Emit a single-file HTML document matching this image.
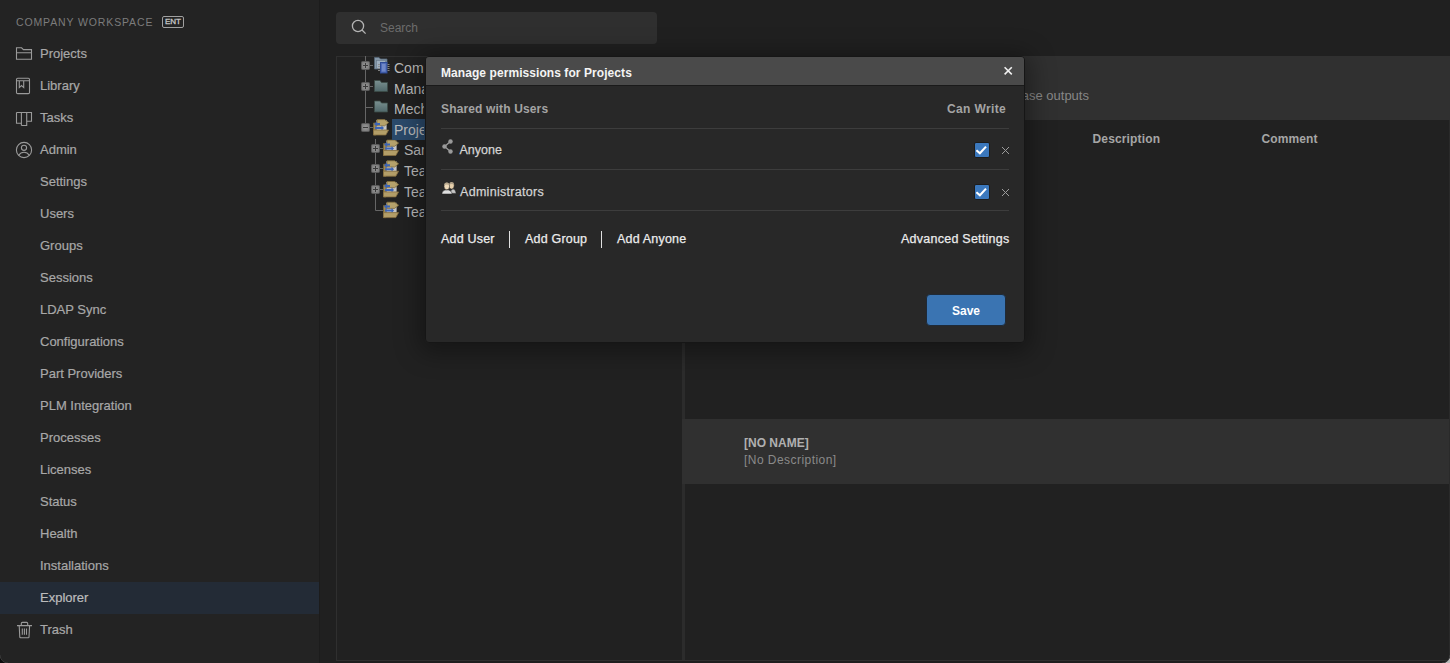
<!DOCTYPE html>
<html><head><meta charset="utf-8">
<style>
*{box-sizing:border-box;margin:0;padding:0}
html,body{width:1450px;height:663px;overflow:hidden;background:#202020;font-family:"Liberation Sans",sans-serif}
.a{position:absolute;white-space:nowrap}
#side{position:absolute;left:0;top:0;width:320px;height:663px;background:#232323;border-right:1px solid #1c1c1c;overflow:hidden}
.ws{left:16px;top:16px;font-size:10.5px;line-height:12px;letter-spacing:0.87px;color:#7c7c7c}
.ent{left:162px;top:16px;width:22px;height:12px;border:1px solid #a0a0a0;border-radius:2px;font-size:8px;color:#c8c8c8;text-align:center;line-height:10px;-webkit-text-stroke:0.3px #c8c8c8}
.mi{left:40px;font-size:13px;color:#a8a8a8;line-height:16px;-webkit-text-stroke:0.2px #a8a8a8}
.ic{position:absolute;left:14px}
#sel{position:absolute;left:0;top:582px;width:319px;height:32px;background:#232b36}
#search{position:absolute;left:336px;top:12px;width:321px;height:32px;background:#2f2f2f;border-radius:4px}
#tree{position:absolute;left:336px;top:56px;width:347px;height:605px;background:#212121;border:1px solid #2f2f2f;border-right:none}
#divider{position:absolute;left:682px;top:56px;width:3px;height:607px;background:#2c2c2c}
#right{position:absolute;left:685px;top:56px;width:765px;height:607px;background:#212121}
#rhead{position:absolute;left:685px;top:56px;width:765px;height:64px;background:#303030}
#row{position:absolute;left:682px;top:419px;width:768px;height:65px;background:#303030}
.th{font-size:12px;font-weight:bold;color:#a6a6a6;line-height:14px}
.tt{font-size:14px;color:#bcbcbc;line-height:16px}
#shadow{position:absolute;left:425px;top:56px;width:600px;height:287px;box-shadow:0 4px 24px 6px rgba(0,0,0,.35);border-radius:4px}
#modal{position:absolute;left:425px;top:56px;width:600px;height:287px;background:#282828;border:1px solid #161616;border-radius:4px;overflow:hidden}
#mhead{position:absolute;left:0;top:0;width:598px;height:29px;background:#4a4a4a;border-bottom:1px solid #1a1a1a}
.mt{font-size:12px;line-height:14px}
.md{-webkit-text-stroke:0.25px currentColor}
.sep{position:absolute;left:15px;width:568px;height:1px;background:#3d3d3d}
.cb{position:absolute;width:16px;height:16px;background:#3b78bd;border:1px solid #1c1c1c;border-radius:2px}
#save{position:absolute;left:500px;top:237px;width:80px;height:32px;background:#3a74b2;border-radius:4px;border:1px solid #1e2a38}
</style></head><body>
<div id="side">
  <div class="a ws">COMPANY WORKSPACE</div>
  <div class="a ent">ENT</div>
  <div id="sel"></div>
  <svg class="ic" style="top:0;left:0" width="40" height="663" fill="none" stroke="#9a9a9a" stroke-width="1.1">
    <!-- folder -->
    <path d="M16.5 47.8 H21.6 L23.4 49.6 H31.5 V59.3 H16.5 Z M16.5 52.8 H31.5"/>
    <!-- library -->
    <rect x="16.5" y="78.3" width="13" height="15.3" rx="1.2"/>
    <path d="M16.5 80.8 H29.5 M19.3 80.8 V87.6 L21.5 85.6 L23.7 87.6 V80.8"/>
    <!-- tasks -->
    <path d="M16.5 112.5 H31.5 V121.2 H26.7 M16.5 112.5 V123.3 H21.4 V112.5 M21.4 125.5 H26.7 V112.5 M21.4 123.3 V125.5"/>
    <!-- admin -->
    <circle cx="24" cy="150" r="7.6"/>
    <circle cx="24" cy="147.8" r="2.6"/>
    <path d="M18.6 155.4 C20 153.2 22 152.3 24 152.3 C26 152.3 28 153.2 29.4 155.4"/>
    <!-- trash -->
    <path d="M17 625.6 H32 M21.3 625.6 V623.5 Q21.3 622.4 22.4 622.4 H26.6 Q27.7 622.4 27.7 623.5 V625.6 M19.2 625.6 L19.8 637.2 Q19.9 637.8 20.5 637.8 H28.3 Q28.9 637.8 29 637.2 L29.6 625.6 M22.3 628.4 V634.8 M24.4 628.4 V634.8 M26.5 628.4 V634.8"/>
  </svg>
  <div class="a mi" style="top:46px">Projects</div>
  <div class="a mi" style="top:78px">Library</div>
  <div class="a mi" style="top:110px">Tasks</div>
  <div class="a mi" style="top:142px">Admin</div>
  <div class="a mi" style="top:174px">Settings</div>
  <div class="a mi" style="top:206px">Users</div>
  <div class="a mi" style="top:238px">Groups</div>
  <div class="a mi" style="top:270px">Sessions</div>
  <div class="a mi" style="top:302px">LDAP Sync</div>
  <div class="a mi" style="top:334px">Configurations</div>
  <div class="a mi" style="top:366px">Part Providers</div>
  <div class="a mi" style="top:398px">PLM Integration</div>
  <div class="a mi" style="top:430px">Processes</div>
  <div class="a mi" style="top:462px">Licenses</div>
  <div class="a mi" style="top:494px">Status</div>
  <div class="a mi" style="top:526px">Health</div>
  <div class="a mi" style="top:558px">Installations</div>
  <div class="a mi" style="top:590px;color:#bcbcbc;-webkit-text-stroke-color:#bcbcbc">Explorer</div>
  <div class="a mi" style="top:622px">Trash</div>
</div>

<div id="search">
  <svg style="position:absolute;left:0;top:0" width="60" height="32" fill="none" stroke="#b4b4b4" stroke-width="1.3">
    <circle cx="22" cy="14" r="5.6"/><path d="M26 18 L29.6 21.6"/>
  </svg>
  <div class="a" style="left:44px;top:9px;font-size:12px;line-height:14px;color:#6c6c6c">Search</div>
</div>

<div id="tree"></div>
<div id="right"></div>
<div id="divider"></div>
<div id="rhead"><div class="a" style="left:310px;top:32px;font-size:13px;line-height:16px;color:#878787">Release outputs</div></div>
<div class="a th" style="left:1092.5px;top:132px;letter-spacing:0.15px">Description</div>
<div class="a th" style="left:1261.5px;top:132px;letter-spacing:0.1px">Comment</div>
<div id="row">
  <div class="a" style="left:62px;top:17px;font-size:12px;line-height:14px;font-weight:bold;color:#b0b0b0">[NO NAME]</div>
  <div class="a" style="left:62px;top:34px;font-size:12px;line-height:14px;letter-spacing:0.45px;color:#8a8a8a">[No Description]</div>
</div>

<!-- tree content -->
<svg style="position:absolute;left:336px;top:56px" width="120" height="180">
  <defs>
    <linearGradient id="fg" x1="0" y1="0" x2="0" y2="1"><stop offset="0" stop-color="#7a9090"/><stop offset="1" stop-color="#50686a"/></linearGradient>
    <radialGradient id="bx" cx="0.5" cy="0.5" r="0.6"><stop offset="0" stop-color="#9a9a9a"/><stop offset="1" stop-color="#767676"/></radialGradient>
    <g id="pf">
      <path d="M0.5 4 V16 H3 V4 Z" fill="#9c8858" stroke="#7a6838" stroke-width="0.8"/>
      <rect x="3.5" y="1.5" width="10" height="10" fill="#c6c6c6" stroke="#8a8a8a" stroke-width="0.8"/>
      <path d="M4 0.6 H11.6 L15.6 3.6 L11.6 6.8 H4 Z" fill="#b5a26c" stroke="#806c3c" stroke-width="0.8"/>
      <path d="M1 5 L4 2.4 V4 H7 V6 H4 V7.6 Z" fill="#3c64b4"/>
      <path d="M2 8 H8.5 V6.4 L11 9 L8.5 11.6 V10 H2 Z" fill="#3c64b4"/>
      <path d="M0.5 11 H15.6 L12.8 16 H0.5 Z" fill="#b39e68" stroke="#866f40" stroke-width="0.8"/>
    </g>
  </defs>
  <g stroke="#666" stroke-width="1" fill="none">
    <path d="M29.5 0 V67 M34 9.5 H37 M34 30.5 H37 M29.5 51.5 H37 M34 71.5 H37"/>
    <path d="M39.5 83 V154.5 H47 M44 92.5 H47 M44 112.5 H47 M44 133.5 H47"/>
  </g>
  <g fill="url(#bx)" stroke="#5c5c5c" stroke-width="1">
    <rect x="25.5" y="5.5" width="8" height="8" rx="1"/>
    <rect x="25.5" y="26.5" width="8" height="8" rx="1"/>
    <rect x="25.5" y="67.5" width="8" height="8" rx="1"/>
    <rect x="35.5" y="88.5" width="8" height="8" rx="1"/>
    <rect x="35.5" y="108.5" width="8" height="8" rx="1"/>
    <rect x="35.5" y="129.5" width="8" height="8" rx="1"/>
  </g>
  <g stroke="#3a3a3a" stroke-width="1">
    <path d="M27 9.5 H32 M29.5 7 V12 M27 30.5 H32 M29.5 28 V33 M27 71.5 H32 M37 92.5 H42 M39.5 90 V95 M37 112.5 H42 M39.5 110 V115 M37 133.5 H42 M39.5 131 V136"/>
  </g>
  <!-- com icon -->
  <g>
    <path d="M38.5 1.5 H43 L44.5 3 H51 V13 H38.5 Z" fill="#8598a8" stroke="#55677a" stroke-width="0.8"/>
    <rect x="40.5" y="4.5" width="9" height="8" fill="#9fb0c0" stroke="#667788" stroke-width="0.6"/>
    <rect x="44.5" y="6.5" width="6.5" height="10.5" fill="#4f6cb8" stroke="#2f4b96" stroke-width="1"/>
    <rect x="46" y="8" width="3.5" height="7.5" fill="#7088c8"/>
    <path d="M42 8.5 H44 M42 10.5 H44 M42 12.5 H44 M42 14.5 H44 M51.5 8.5 H53.5 M51.5 10.5 H53.5 M51.5 12.5 H53.5 M51.5 14.5 H53.5" stroke="#8a8a8a" stroke-width="0.9"/>
  </g>
  <path d="M38.5 24.5 H44 L45.5 26.5 H51.5 V35.5 H38.5 Z" fill="url(#fg)" stroke="#3c4c48" stroke-width="0.8"/>
  <path d="M38.5 45 H44 L45.5 47 H51.5 V56 H38.5 Z" fill="url(#fg)" stroke="#3c4c48" stroke-width="0.8"/>
  <use href="#pf" x="37" y="63"/>
  <use href="#pf" x="47" y="83.5"/>
  <use href="#pf" x="47" y="104.2"/>
  <use href="#pf" x="47" y="124.9"/>
  <use href="#pf" x="47" y="145.6"/>
</svg>
<div style="position:absolute;left:392px;top:119px;width:60px;height:21px;background:#2b4a6b"></div>
<div style="position:absolute;left:390px;top:56px;width:34px;height:170px;overflow:hidden">
<div class="a tt" style="left:4px;top:4px">Company</div>
<div class="a tt" style="left:4px;top:25px">Management</div>
<div class="a tt" style="left:4px;top:45px">Mechanical</div>
<div class="a tt" style="left:4px;top:66px">Projects</div>
<div class="a tt" style="left:14px;top:86px">Samples</div>
<div class="a tt" style="left:14px;top:107px">Team A</div>
<div class="a tt" style="left:14px;top:128px">Team B</div>
<div class="a tt" style="left:14px;top:148px">Team C</div>
</div>

<div style="position:absolute;left:336px;top:660px;width:1114px;height:1px;background:#2f2f2f"></div>
<div style="position:absolute;left:336px;top:661px;width:1114px;height:2px;background:#1e1e1e"></div>
<div style="position:absolute;left:1449px;top:120px;width:1px;height:540px;background:#2a2a2a"></div>
<svg style="position:absolute;left:0;top:655px" width="8" height="8"><path d="M0 0 A8 8 0 0 0 8 8 L0 8 Z" fill="#0c0c0c"/><path d="M0 0 A8 8 0 0 0 8 8" fill="none" stroke="#3a3a3a" stroke-width="1"/></svg>
<svg style="position:absolute;left:1442px;top:655px" width="8" height="8"><path d="M8 0 A8 8 0 0 1 0 8 L8 8 Z" fill="#bdbdbd"/><path d="M8 0 A8 8 0 0 1 0 8" fill="none" stroke="#3a3a3a" stroke-width="1"/></svg>
<div id="shadow"></div>
<div id="modal">
  <div id="mhead">
    <div class="a mt" style="left:15px;top:9px;color:#f4f4f4;font-weight:bold;letter-spacing:0.07px">Manage permissions for Projects</div>
    <svg style="position:absolute;left:577px;top:9px" width="10" height="10" stroke="#f0f0f0" stroke-width="1.6"><path d="M1.6 1.2 L8.8 8.4 M8.8 1.2 L1.6 8.4"/></svg>
  </div>
  <div class="a mt" style="left:15px;top:45px;color:#a4a4a4;font-weight:bold;letter-spacing:0.15px">Shared with Users</div>
  <div class="a mt" style="right:18px;top:45px;color:#a4a4a4;font-weight:bold;letter-spacing:0.35px">Can Write</div>
  <div class="sep" style="top:71px"></div>
  <svg style="position:absolute;left:14px;top:81px" width="14" height="16" fill="#9a9a9a" stroke="#9a9a9a" stroke-width="1.3">
    <path d="M10.5 3.5 L4.5 8.5 L10.5 13.5" fill="none"/>
    <circle cx="10.5" cy="3.5" r="2.2" stroke="none"/><circle cx="4.5" cy="8.5" r="2.2" stroke="none"/><circle cx="10.5" cy="13.5" r="2.2" stroke="none"/>
  </svg>
  <div class="a mt md" style="left:33.5px;top:86px;color:#d4d4d4;font-size:12.5px">Anyone</div>
  <div class="cb" style="left:548px;top:85px"><svg width="14" height="14" style="position:absolute;left:0;top:0" fill="none" stroke="#fff" stroke-width="2.1"><path d="M1.4 7.2 L4.9 10.2 L11 3.6"/></svg></div>
  <svg style="position:absolute;left:575px;top:89px" width="9" height="9" stroke="#9c9c9c" stroke-width="1"><path d="M1 1 L8 8 M8 1 L1 8"/></svg>
  <div class="sep" style="top:112px"></div>
  <svg style="position:absolute;left:15px;top:124px" width="17" height="15">
    <path d="M9.2 12.4 Q9.6 7.9 12 7.9 Q14.6 7.9 15.2 12.4 Z" fill="#c6c6c6" stroke="#1c1c1c" stroke-width="0.5"/>
    <ellipse cx="10.6" cy="4.6" rx="2.6" ry="3.5" fill="#e6cfab" stroke="#1c1c1c" stroke-width="0.5"/>
    <path d="M8 3.4 Q8.5 0.9 10.6 0.9 Q12.8 0.9 13.2 3.4 Q10.6 2.4 8 3.4 Z" fill="#b0a088"/>
    <path d="M0.8 13 Q1.4 8.8 5.8 8.8 Q10.2 8.8 11.2 13 Z" fill="#dedede" stroke="#1c1c1c" stroke-width="0.5"/>
    <ellipse cx="5.8" cy="5.2" rx="2.8" ry="3.6" fill="#eedab9" stroke="#1c1c1c" stroke-width="0.5"/>
    <path d="M3 4 Q3.4 1.4 5.8 1.4 Q8.2 1.4 8.6 4 Q5.8 3 3 4 Z" fill="#b8a98f"/>
  </svg>
  <div class="a mt md" style="left:34px;top:128px;color:#d4d4d4;font-size:12.5px;letter-spacing:0.3px">Administrators</div>
  <div class="cb" style="left:548px;top:127px"><svg width="14" height="14" style="position:absolute;left:0;top:0" fill="none" stroke="#fff" stroke-width="2.1"><path d="M1.4 7.2 L4.9 10.2 L11 3.6"/></svg></div>
  <svg style="position:absolute;left:575px;top:131px" width="9" height="9" stroke="#9c9c9c" stroke-width="1"><path d="M1 1 L8 8 M8 1 L1 8"/></svg>
  <div class="sep" style="top:153px"></div>
  <div class="a mt md" style="left:15px;top:175px;color:#ececec;font-size:12.5px;letter-spacing:0.2px">Add User</div>
  <div style="position:absolute;left:83px;top:174px;width:1px;height:17px;background:#e0e0e0"></div>
  <div class="a mt md" style="left:99px;top:175px;color:#ececec;font-size:12.5px;letter-spacing:0.2px">Add Group</div>
  <div style="position:absolute;left:175px;top:174px;width:1px;height:17px;background:#e0e0e0"></div>
  <div class="a mt md" style="left:191px;top:175px;color:#ececec;font-size:12.5px;letter-spacing:0.2px">Add Anyone</div>
  <div class="a mt md" style="left:475px;top:175px;color:#ececec;font-size:12.5px;letter-spacing:0.25px">Advanced Settings</div>
  <div id="save"><div class="a mt" style="left:25px;top:9px;color:#fff;font-weight:bold">Save</div></div>
</div>
</body></html>
